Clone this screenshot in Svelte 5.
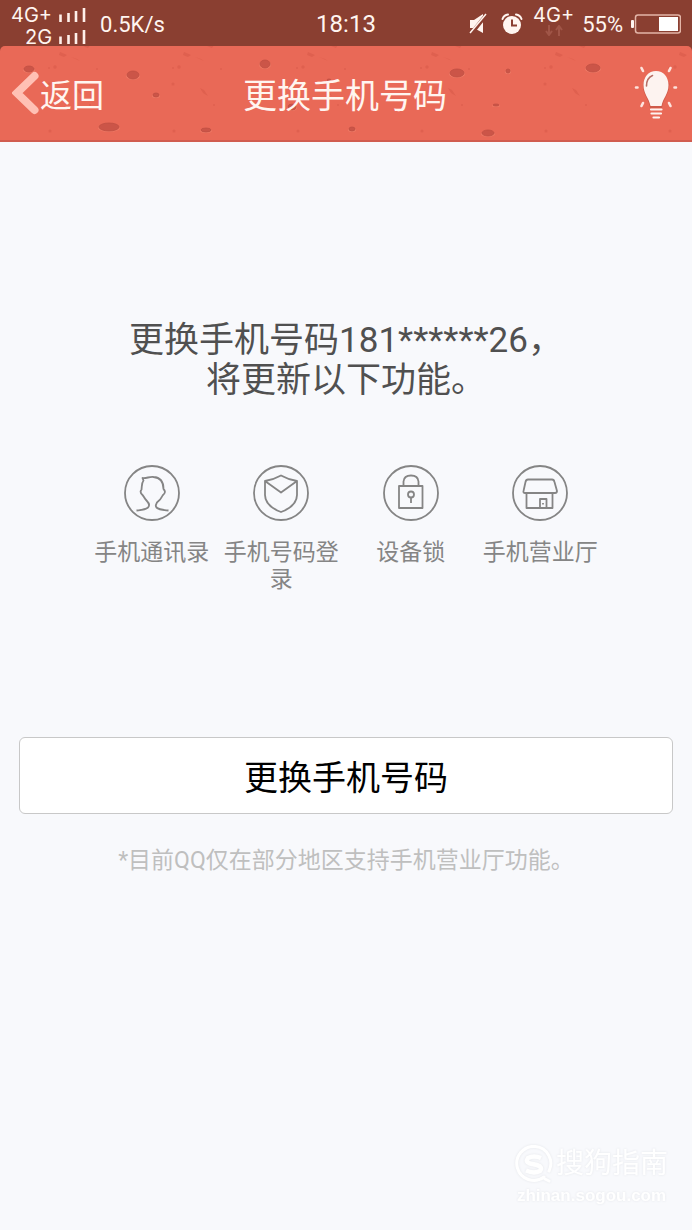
<script>
  const features = [
    { id: 'contacts', label: '手机通讯录' },
    { id: 'login', label: '手机号码登录' },
    { id: 'lock', label: '设备锁' },
    { id: 'store', label: '手机营业厅' }
  ];

  const spots = [
    [29, 24, 5, 3], [133, 30, 6, 4], [156, 50, 3, 2], [109, 82, 10, 4], [206, 85, 5, 2],
    [265, 19, 5, 4], [292, 62, 4, 3], [352, 84, 3, 2], [457, 28, 7, 4], [593, 23, 7, 4],
    [496, 60, 3, 1], [508, 26, 2, 2], [488, 88, 6, 3], [329, 35, 2, 1]
  ];

  const marks = [0, 124, 248, 372, 496, 620];
</script>

<div class="screen">
  <div class="status">
    <div class="side">
      <div class="networks">
        {#each ['4G+', '2G'] as name}
          <div class="network">
            <span>{name}</span>
            <svg width="27" height="14" viewBox="0 0 27 14" aria-hidden="true">
              <path d="M1.5 6.500V14M9.500 5V14M17 3V14M25 0V14" stroke="#fff0ea" stroke-width="2.600" />
            </svg>
          </div>
        {/each}
      </div>
      <span class="speed">0.5K/s</span>
    </div>
    <time>18:13</time>
    <div class="side right">
      <svg width="20" height="22" viewBox="0 0 20 22" aria-hidden="true">
        <path d="M1 7H5L14 1V20L5 15H1Z" fill="#fff5f0" />
        <path d="M2 21L18 1" stroke="#8a3f31" stroke-width="4" />
        <path d="M1 20L17 1" stroke="#fff5f0" stroke-width="1.500" />
      </svg>
      <svg class="alarm" width="22" height="22" viewBox="0 0 22 22" aria-hidden="true">
        <circle cx="11" cy="12" r="9" fill="#fff5f0" />
        <path d="M1.500 6Q3 2 7 1.500M20.500 6Q19 2 15 1.500" fill="none" stroke="#fff5f0" stroke-width="2" stroke-linecap="round" />
        <path d="M11 6.500V12.500H16" fill="none" stroke="#8a3f31" stroke-width="2" />
      </svg>
      <div class="data">
        <span>4G+</span>
        <svg width="18" height="11" viewBox="0 0 18 11" aria-hidden="true">
          <path d="M4 0V9M1 6L4 10L7 6M14 11V2M11 5L14 1L17 5" fill="none" stroke="#a05547" stroke-width="2" />
        </svg>
      </div>
      <span class="percent">55%</span>
      <svg width="50" height="20" viewBox="0 0 50 20" aria-hidden="true">
        <rect x="0" y="6" width="3" height="8" rx="1" fill="#fff5f0" />
        <rect x="4.500" y="1" width="45" height="18" rx="2.500" fill="none" stroke="#e3b5a8" stroke-width="1.500" />
        <rect x="28" y="3" width="19" height="14" fill="#fff" />
      </svg>
    </div>
  </div>

  <header>
    <svg class="texture" viewBox="0 0 692 96" preserveAspectRatio="xMidYMid slice" aria-hidden="true">
      {#each marks as x}
        <g transform="translate({x} 0)" fill="#d95b4a" opacity="0.6">
          <path d="M60 7L67 10L64 12L59 10ZM83 1L90 0L88 3ZM71 12L80 16L77 14ZM76 43L80 45L84 51L79 48Z" />
          <circle cx="55" cy="22" r="1.700" />
          <circle cx="49" cy="23" r="1" />
          <circle cx="90" cy="60" r="1" />
          <circle cx="50" cy="86" r="1.500" />
          <circle cx="97" cy="24" r="1" />
          <circle cx="49" cy="39" r="1.500" />
        </g>
      {/each}
      {#each spots as [cx, cy, rx, ry]}
        <ellipse {cx} cy={cy + 1} rx={rx + 1} {ry} fill="#ee7965" />
        <ellipse {cx} {cy} {rx} {ry} fill="#cb5548" stroke="#c04f42" stroke-width="0.800" />
      {/each}
    </svg>
    <a class="back" href="#back">
      <svg width="28" height="44" viewBox="0 0 28 44" aria-hidden="true">
        <path d="M22.500 5L5 22L22.500 39" fill="none" stroke="#ffc0b4" stroke-width="8" stroke-linecap="round" stroke-linejoin="miter" />
      </svg>
      <span>返回</span>
    </a>
    <h1>更换手机号码</h1>
    <button class="tips" aria-label="提示">
      <svg width="44" height="54" viewBox="0 0 44 54" aria-hidden="true">
        <path d="M22 6C14 6 9 12 9 20C9 29 15 33 16 42H28C29 33 35 29 35 20C35 12 30 6 22 6Z" fill="#cf5a4a" />
        <path d="M22 5C14.500 5 9.500 11 9.500 19C9.500 28 15 32 16.500 40H27.500C29 32 34.500 28 34.500 19C34.500 11 29.500 5 22 5Z" fill="#fdf3f0" />
        <path d="M12.500 20Q12.500 12 18.500 9.500" fill="none" stroke="#b76f66" stroke-width="1.600" stroke-linecap="round" />
        <path d="M17 43.500H27.500M17.500 47.500H27M19.500 51.500H25" stroke="#fdf3f0" stroke-width="2.200" stroke-linecap="round" />
        <path d="M7.500 2L9 5M36.500 2L35 5M2 21.500H3.500M40.500 21.500H42M7.500 40L9 37M36.500 40L35 37" stroke="#fde3dd" stroke-width="2.600" stroke-linecap="round" />
      </svg>
    </button>
  </header>

  <main>
    <p class="intro">更换手机号码181******26，<br />将更新以下功能。</p>

    <ul>
      {#each features as feature}
        <li>
          <svg width="56" height="56" viewBox="0 0 56 56" fill="none" stroke="#858585" stroke-width="1.800" stroke-linejoin="round" aria-hidden="true">
            <circle cx="28" cy="28" r="27" />
            {#if feature.id === 'contacts'}
              <path d="M12.500 45.500C17 45 21 45 24 42.500C26 40.500 25 38 22.500 35.500C20 33 20 31.500 18.500 30C16 28 16 26.500 17.500 24.500C18 21 17.500 18 19.500 15.500L18.500 13C23 13.500 25 11.500 29.500 12C36.500 12.500 39.500 17 39.500 24C41.500 26 41.500 28 39 30C37.500 32 37 34 35 35.500C31.500 38 31 40 32.500 42.500C35 45 40 45 44.500 45.500" />
            {:else if feature.id === 'login'}
              <path d="M12 16Q21 14.500 28 10.500Q35 14.500 44 16V30C44 39 36 44 28 47C20 44 12 39 12 30ZM12 16L28 27.500L44 16" />
            {:else if feature.id === 'lock'}
              <rect x="16" y="21" width="23.500" height="22" />
              <path d="M20.500 21V16.500Q21 10.500 28 10.500Q35 10.500 35.500 16.500V21" />
              <circle cx="28" cy="29.500" r="3" />
              <path d="M28 32.500V38" />
            {:else}
              <path d="M16 14.500H40Q42 14.500 42.500 17L45 26Q45 28 43 28H13Q11 28 11.500 26L13.500 17Q14 14.500 16 14.500ZM14.500 28V43H40.500V28M28 43V34H34.500V43" />
              <path d="M31 38V39.500" />
            {/if}
          </svg>
          <span>{feature.label}</span>
        </li>
      {/each}
    </ul>

    <button class="change">更换手机号码</button>
    <p class="note">*目前QQ仅在部分地区支持手机营业厅功能。</p>
  </main>

  <div class="watermark">
    <div class="brand">
      <svg width="38" height="38" viewBox="0 0 38 38" fill="none" stroke="#fff" aria-hidden="true">
        <path d="M29 32A17 17 0 1 1 34 26M30 34L34 36" stroke-width="3" stroke-linecap="round" />
        <path d="M26 13Q19 10 13 13Q10 17 15 18.500L22 20Q28 22 25 26Q19 29 11 25.500" stroke-width="4.500" />
      </svg>
      <span>搜狗指南</span>
    </div>
    <span class="site">zhinan.sogou.com</span>
  </div>
</div>

<style>
  :global(body) {
    margin: 0;
    background: #f8f9fc;
  }

  .screen {
    position: relative;
    display: flex;
    flex-direction: column;
    min-height: 100vh;
    background: #f8f9fc;
    font-family: Roboto, "Noto Sans CJK SC", sans-serif;
  }

  .status {
    display: grid;
    grid-template-columns: 1fr auto 1fr;
    align-items: center;
    height: 46px;
    margin-bottom: -6px;
    padding: 0 11px 6px;
    background: #8a3f31;
    color: #fff5f0;
    font-size: 22px;
  }

  .side {
    display: flex;
    align-items: center;
    gap: 14px;
  }

  .networks {
    display: flex;
    flex-direction: column;
    align-items: flex-end;
    padding-top: 4px;
  }

  .network {
    display: flex;
    align-items: center;
    gap: 7px;
    font: 400 20px/22px Inter, sans-serif;
  }

  time {
    font-size: 24px;
    line-height: 48px;
  }

  .right {
    justify-content: flex-end;
    gap: 8px;
  }

  .alarm {
    margin: 0 2px 0 4px;
  }

  .data {
    display: flex;
    flex-direction: column;
    align-items: center;
    padding-bottom: 8px;
    font: 400 20px/20px Inter, sans-serif;
  }

  header {
    position: relative;
    display: grid;
    grid-template-columns: 1fr auto 1fr;
    align-items: center;
    height: 96px;
    box-sizing: border-box;
    padding: 0 14px 0 12px;
    overflow: hidden;
    background: #e96957;
    border-bottom: 2px solid #d15d50;
    border-radius: 5px 5px 0 0;
    color: #fff5f0;
  }

  .texture {
    position: absolute;
    inset: 0;
    width: 100%;
    height: 100%;
  }

  .back {
    position: relative;
    display: flex;
    align-items: center;
    color: inherit;
    font-size: 32px;
    text-decoration: none;
  }

  h1 {
    position: relative;
    margin: 0;
    font-size: 34px;
    font-weight: 400;
  }

  .tips {
    position: relative;
    display: flex;
    justify-self: end;
    padding: 0;
    border: 0;
    background: none;
  }

  main {
    display: flex;
    flex-direction: column;
    padding: 179px 19px 0;
    text-align: center;
  }

  .intro {
    margin: 0;
    color: #505050;
    font-size: 35px;
    line-height: 40px;
  }

  ul {
    display: grid;
    grid-template-columns: repeat(4, 1fr);
    margin: 64px 68px 0;
    padding: 0;
    list-style: none;
  }

  li {
    display: flex;
    flex-direction: column;
    align-items: center;
    gap: 18px;
    color: #858585;
    font-size: 23px;
    line-height: 27px;
  }

  li span {
    max-width: 5em;
  }

  .change {
    height: 77px;
    margin-top: 144px;
    padding: 0;
    border: 1px solid #c8c8c8;
    border-radius: 6px;
    background: #fff;
    color: #000;
    font: inherit;
    font-size: 34px;
  }

  .note {
    margin: 31px 0 0;
    color: #bfbfbf;
    font-size: 23px;
    line-height: 32px;
  }

  .watermark {
    position: absolute;
    right: 24px;
    bottom: 22px;
    color: #fff;
    filter: drop-shadow(0 0 1px #e4e6ea);
  }

  .brand {
    display: flex;
    align-items: center;
    gap: 3px;
    font-size: 28px;
    line-height: 40px;
  }

  .site {
    display: block;
    font: 700 17px/24px "Liberation Sans", sans-serif;
    text-align: center;
  }
</style>
